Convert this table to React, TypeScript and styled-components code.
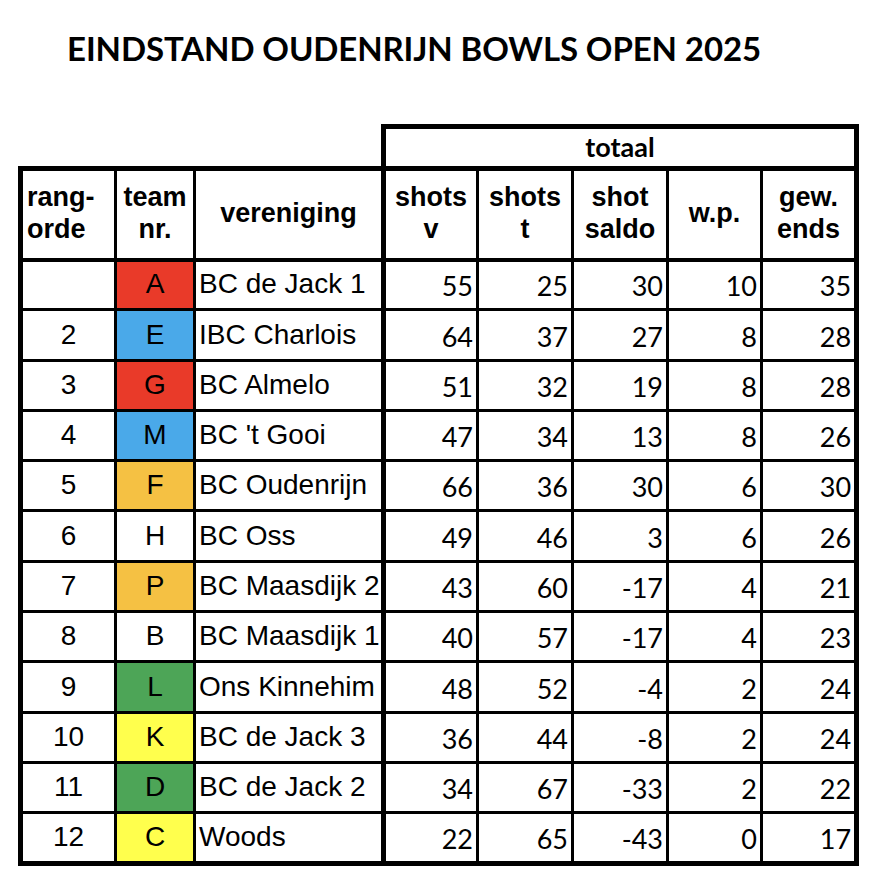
import React from "react";
import styled, { createGlobalStyle, css } from "styled-components";

const GlobalStyle = createGlobalStyle`
    html, body {
        margin: 0;
        padding: 0;
        background: #fff;
    }
    body {
        font-family: "Liberation Sans", Arial, sans-serif;
        color: #000;
    }
`;

const colors = {
    red: "#e93a29",
    blue: "#4aa9e9",
    orange: "#f5c143",
    green: "#4da557",
    yellow: "#ffff4d",
    none: "transparent",
};

type TeamColor = keyof typeof colors;

type Row = {
    rank: string;
    team: string;
    color: TeamColor;
    club: string;
    shotsV: number;
    shotsT: number;
    saldo: number;
    wp: number;
    ends: number;
};

const rows: Row[] = [
    { rank: "", team: "A", color: "red", club: "BC de Jack 1", shotsV: 55, shotsT: 25, saldo: 30, wp: 10, ends: 35 },
    { rank: "2", team: "E", color: "blue", club: "IBC Charlois", shotsV: 64, shotsT: 37, saldo: 27, wp: 8, ends: 28 },
    { rank: "3", team: "G", color: "red", club: "BC Almelo", shotsV: 51, shotsT: 32, saldo: 19, wp: 8, ends: 28 },
    { rank: "4", team: "M", color: "blue", club: "BC 't Gooi", shotsV: 47, shotsT: 34, saldo: 13, wp: 8, ends: 26 },
    { rank: "5", team: "F", color: "orange", club: "BC Oudenrijn", shotsV: 66, shotsT: 36, saldo: 30, wp: 6, ends: 30 },
    { rank: "6", team: "H", color: "none", club: "BC Oss", shotsV: 49, shotsT: 46, saldo: 3, wp: 6, ends: 26 },
    { rank: "7", team: "P", color: "orange", club: "BC Maasdijk 2", shotsV: 43, shotsT: 60, saldo: -17, wp: 4, ends: 21 },
    { rank: "8", team: "B", color: "none", club: "BC Maasdijk 1", shotsV: 40, shotsT: 57, saldo: -17, wp: 4, ends: 23 },
    { rank: "9", team: "L", color: "green", club: "Ons Kinnehim", shotsV: 48, shotsT: 52, saldo: -4, wp: 2, ends: 24 },
    { rank: "10", team: "K", color: "yellow", club: "BC de Jack 3", shotsV: 36, shotsT: 44, saldo: -8, wp: 2, ends: 24 },
    { rank: "11", team: "D", color: "green", club: "BC de Jack 2", shotsV: 34, shotsT: 67, saldo: -33, wp: 2, ends: 22 },
    { rank: "12", team: "C", color: "yellow", club: "Woods", shotsV: 22, shotsT: 65, saldo: -43, wp: 0, ends: 17 },
];

const colWidths = [95, 79, 189, 94, 95, 95, 94, 95];

const Page = styled.div`
    padding: 26px 0 0 18px;
`;

const Title = styled.h1`
    margin: 0 0 0 49px;
    font-family: Lato, "Open Sans", sans-serif;
    font-weight: 700;
    font-size: 33px;
    line-height: 44px;
    letter-spacing: -0.1px;
    white-space: nowrap;
`;

const Table = styled.table`
    margin-top: 54px;
    border-collapse: collapse;
    table-layout: fixed;
    width: 836px;
`;

const TotalRow = styled.tr`
    height: 42px;
`;

const HeadRow = styled.tr`
    height: 91px;
`;

const DataRow = styled.tr`
    height: 50.3px;
`;

const Blank = styled.td`
    border: none;
    padding: 0;
`;

const TotalCell = styled.td`
    border: 5px solid #000;
    padding: 0 0 2px;
    text-align: center;
    vertical-align: middle;
    font-family: Lato, "Open Sans", sans-serif;
    font-weight: 700;
    font-size: 27px;
`;

const HeadCell = styled.th<{ $align?: "left" | "center"; $thickLeft?: boolean; $thickRight?: boolean }>`
    border: 3px solid #000;
    border-top-width: 5px;
    border-bottom-width: 4px;
    padding: 0 4px 3px;
    font-weight: 700;
    font-size: 27px;
    line-height: 32px;
    text-align: ${(p) => p.$align ?? "center"};
    vertical-align: middle;
    ${(p) => p.$thickLeft && css`border-left-width: 5px;`}
    ${(p) => p.$thickRight && css`border-right-width: 5px;`}
`;

const Cell = styled.td<{ $thickLeft?: boolean; $thickRight?: boolean; $last?: boolean }>`
    border: 3px solid #000;
    padding: 0 4px 9px;
    vertical-align: bottom;
    white-space: nowrap;
    font-size: 28px;
    line-height: 30px;
    ${(p) => p.$thickLeft && css`border-left-width: 5px;`}
    ${(p) => p.$thickRight && css`border-right-width: 5px;`}
    ${(p) => p.$last && css`border-bottom-width: 5px;`}
`;

const RankCell = styled(Cell)`
    text-align: center;
`;

const TeamCell = styled(Cell)<{ $color: TeamColor }>`
    text-align: center;
    background: ${(p) => colors[p.$color]};
`;

const ClubCell = styled(Cell)`
    text-align: left;
    padding-left: 3px;
    overflow: visible;
`;

const NumCell = styled(Cell)`
    text-align: right;
    padding-right: 3px;
    padding-bottom: 7px;
    font-family: Lato, "Open Sans", sans-serif;
    font-size: 27px;
`;

export default function App() {
    return (
        <Page>
            <GlobalStyle />
            <Title>EINDSTAND OUDENRIJN BOWLS OPEN 2025</Title>
            <Table>
                <colgroup>
                    {colWidths.map((w, i) => (
                        <col key={i} style={{ width: w }} />
                    ))}
                </colgroup>
                <tbody>
                    <TotalRow>
                        <Blank />
                        <Blank />
                        <Blank />
                        <TotalCell colSpan={5}>totaal</TotalCell>
                    </TotalRow>
                    <HeadRow>
                        <HeadCell $align="left" $thickLeft>
                            rang-
                            <br />
                            orde
                        </HeadCell>
                        <HeadCell>
                            team
                            <br />
                            nr.
                        </HeadCell>
                        <HeadCell $thickRight>vereniging</HeadCell>
                        <HeadCell>
                            shots
                            <br />v
                        </HeadCell>
                        <HeadCell>
                            shots
                            <br />t
                        </HeadCell>
                        <HeadCell>
                            shot
                            <br />
                            saldo
                        </HeadCell>
                        <HeadCell>w.p.</HeadCell>
                        <HeadCell $thickRight>
                            gew.
                            <br />
                            ends
                        </HeadCell>
                    </HeadRow>
                    {rows.map((r, i) => {
                        const last = i === rows.length - 1;
                        return (
                            <DataRow key={r.team}>
                                <RankCell $thickLeft $last={last}>{r.rank}</RankCell>
                                <TeamCell $color={r.color} $last={last}>{r.team}</TeamCell>
                                <ClubCell $thickRight $last={last}>{r.club}</ClubCell>
                                <NumCell $last={last}>{r.shotsV}</NumCell>
                                <NumCell $last={last}>{r.shotsT}</NumCell>
                                <NumCell $last={last}>{r.saldo}</NumCell>
                                <NumCell $last={last}>{r.wp}</NumCell>
                                <NumCell $thickRight $last={last}>{r.ends}</NumCell>
                            </DataRow>
                        );
                    })}
                </tbody>
            </Table>
        </Page>
    );
}
